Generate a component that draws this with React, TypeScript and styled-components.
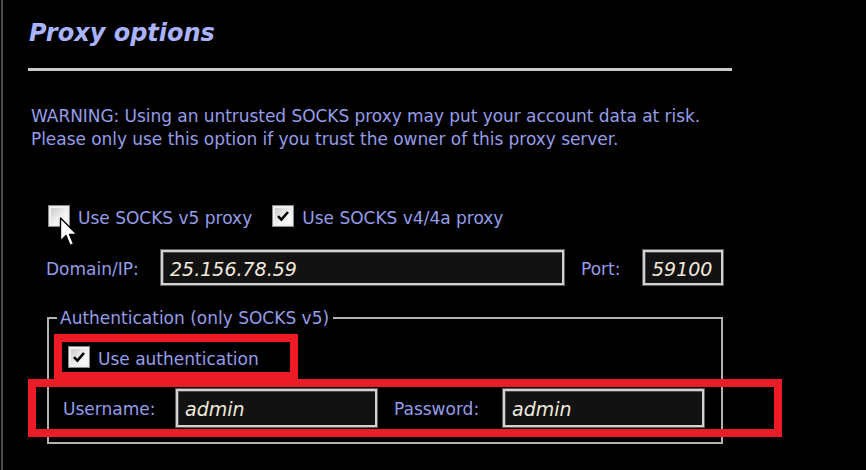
import React, { FC } from 'react';
import styled, { createGlobalStyle } from 'styled-components';

const COLORS = {
    bg: '#000000',
    title: '#a9b3ff',
    text: '#959de8',
    value: '#f1eadb',
    rule: '#c9c9c9',
    field: '#121212',
    red: '#ec1c26',
};

const GlobalStyle = createGlobalStyle`
    html, body {
        margin: 0;
        padding: 0;
        background: ${COLORS.bg};
    }
    * {
        box-sizing: border-box;
    }
`;

const Check: FC<{ checked?: boolean }> = ({ checked }) => (
    <CheckBox>
        {checked && (
            <svg width="14" height="14" viewBox="0 0 14 14">
                <path d="M2 7.2 L5.4 10.6 L12 3" fill="none" stroke="#000" strokeWidth="2.6" />
            </svg>
        )}
    </CheckBox>
);

const Cursor: FC = () => (
    <CursorMark width="20" height="32" viewBox="0 0 20 32">
        <path d="M1.5 1 L1.5 24 L7 18.6 L11 28.5 L14.6 27 L10.6 17.4 L18 17.4 Z" fill="#fff" stroke="#000" strokeWidth="1.4" strokeLinejoin="round" />
    </CursorMark>
);

const App: FC = () => {
    return (
        <Frame>
            <GlobalStyle />
            <Heading>Proxy options</Heading>
            <Rule />
            <Warning>
                WARNING: Using an untrusted SOCKS proxy may put your account data at risk.
                <br />
                Please only use this option if you trust the owner of this proxy server.
            </Warning>
            <OptionRow>
                <Option>
                    <Check />
                    <Cursor />
                    <Label>Use SOCKS v5 proxy</Label>
                </Option>
                <Option>
                    <Check checked />
                    <Label>Use SOCKS v4/4a proxy</Label>
                </Option>
            </OptionRow>
            <FieldRow>
                <Label>Domain/IP:</Label>
                <TextField $width={403}>25.156.78.59</TextField>
                <Label>Port:</Label>
                <TextField $width={80}>59100</TextField>
            </FieldRow>
            <Group>
                <Legend>Authentication (only SOCKS v5)</Legend>
                <Marked>
                    <Option>
                        <Check checked />
                        <Label>Use authentication</Label>
                    </Option>
                </Marked>
                <CredRow>
                    <Label>Username:</Label>
                    <TextField $width={201} $tall>admin</TextField>
                    <Label>Password:</Label>
                    <TextField $width={201} $tall>admin</TextField>
                    <Highlight />
                </CredRow>
            </Group>
        </Frame>
    );
};

export default App;

const Frame = styled.div`
    width: 865px;
    height: 470px;
    margin-left: 1px;
    border-left: 2px solid #4c4c4c;
    background: ${COLORS.bg};
    padding: 19px 0 0 25px;
    font-family: 'DejaVu Sans', Verdana, sans-serif;
    color: ${COLORS.text};
    overflow: hidden;
`;

const Heading = styled.h1`
    margin: 0;
    font-size: 24px;
    line-height: 28px;
    font-weight: bold;
    font-style: italic;
    color: ${COLORS.title};
    padding-left: 1px;
`;

const Rule = styled.div`
    width: 704px;
    height: 3px;
    margin-top: 21px;
    background: ${COLORS.rule};
`;

const Warning = styled.p`
    margin: 34px 0 0 3px;
    font-size: 17px;
    line-height: 23px;
    letter-spacing: -0.05px;
`;

const OptionRow = styled.div`
    display: flex;
    gap: 20px;
    margin: 54px 0 0 20px;
`;

const Option = styled.div`
    position: relative;
    display: flex;
    align-items: center;
    gap: 8px;
    height: 22px;
`;

const CheckBox = styled.span`
    width: 22px;
    height: 22px;
    display: flex;
    align-items: center;
    justify-content: center;
    border: 1px solid #8a8a8a;
    background: linear-gradient(135deg, #c4c4c4 0%, #f4f4f4 60%, #ffffff 100%);
    box-shadow: inset 0 0 0 2px #f0f0f0;
`;

const CursorMark = styled.svg`
    position: absolute;
    left: 11px;
    top: 12px;
`;

const Label = styled.span`
    font-size: 17px;
    line-height: 22px;
    padding-top: 3px;
    white-space: nowrap;
`;

const FieldRow = styled.div`
    display: flex;
    align-items: center;
    margin: 23px 0 0 18px;
    & > span:first-child {
        width: 115px;
    }
    & > div:nth-child(2) {
        margin-right: 17px;
    }
    & > span:nth-child(3) {
        width: 62px;
    }
`;

const TextField = styled.div<{ $width: number; $tall?: boolean }>`
    width: ${(p) => p.$width}px;
    height: ${(p) => (p.$tall ? 38 : 35)}px;
    display: flex;
    align-items: center;
    padding: 2px 0 0 7px;
    background: ${COLORS.field};
    border: 2px solid #d2d2d2;
    box-shadow: 0 0 0 1px #5e5e5e, inset 1px 1px 0 #4a4a4a;
    color: ${COLORS.value};
    font-size: 19px;
    font-style: italic;
`;

const Group = styled.fieldset`
    width: 676px;
    margin: 23px 0 0 19px;
    padding: 0 0 15px 0;
    border: 2px solid #b2b2b2;
    min-width: 0;
`;

const Legend = styled.legend`
    margin-left: 8px;
    padding: 0 4px 0 3px;
    font-size: 17px;
    line-height: 20px;
`;

const Marked = styled.div`
    display: flex;
    width: 244px;
    height: 46px;
    margin: 6px 0 0 5px;
    padding: 0 0 0 6px;
    align-items: center;
    border: 8px solid ${COLORS.red};
`;

const CredRow = styled.div`
    position: relative;
    display: flex;
    align-items: center;
    height: 39px;
    margin-top: 8px;
    padding-left: 14px;
    & > span:first-child {
        width: 113px;
    }
    & > div:nth-child(2) {
        margin-right: 17px;
    }
    & > span:nth-child(3) {
        width: 109px;
    }
`;

const Highlight = styled.div`
    position: absolute;
    top: -9px;
    bottom: -10px;
    left: -21px;
    right: -61px;
    border: 8px solid ${COLORS.red};
    pointer-events: none;
`;
